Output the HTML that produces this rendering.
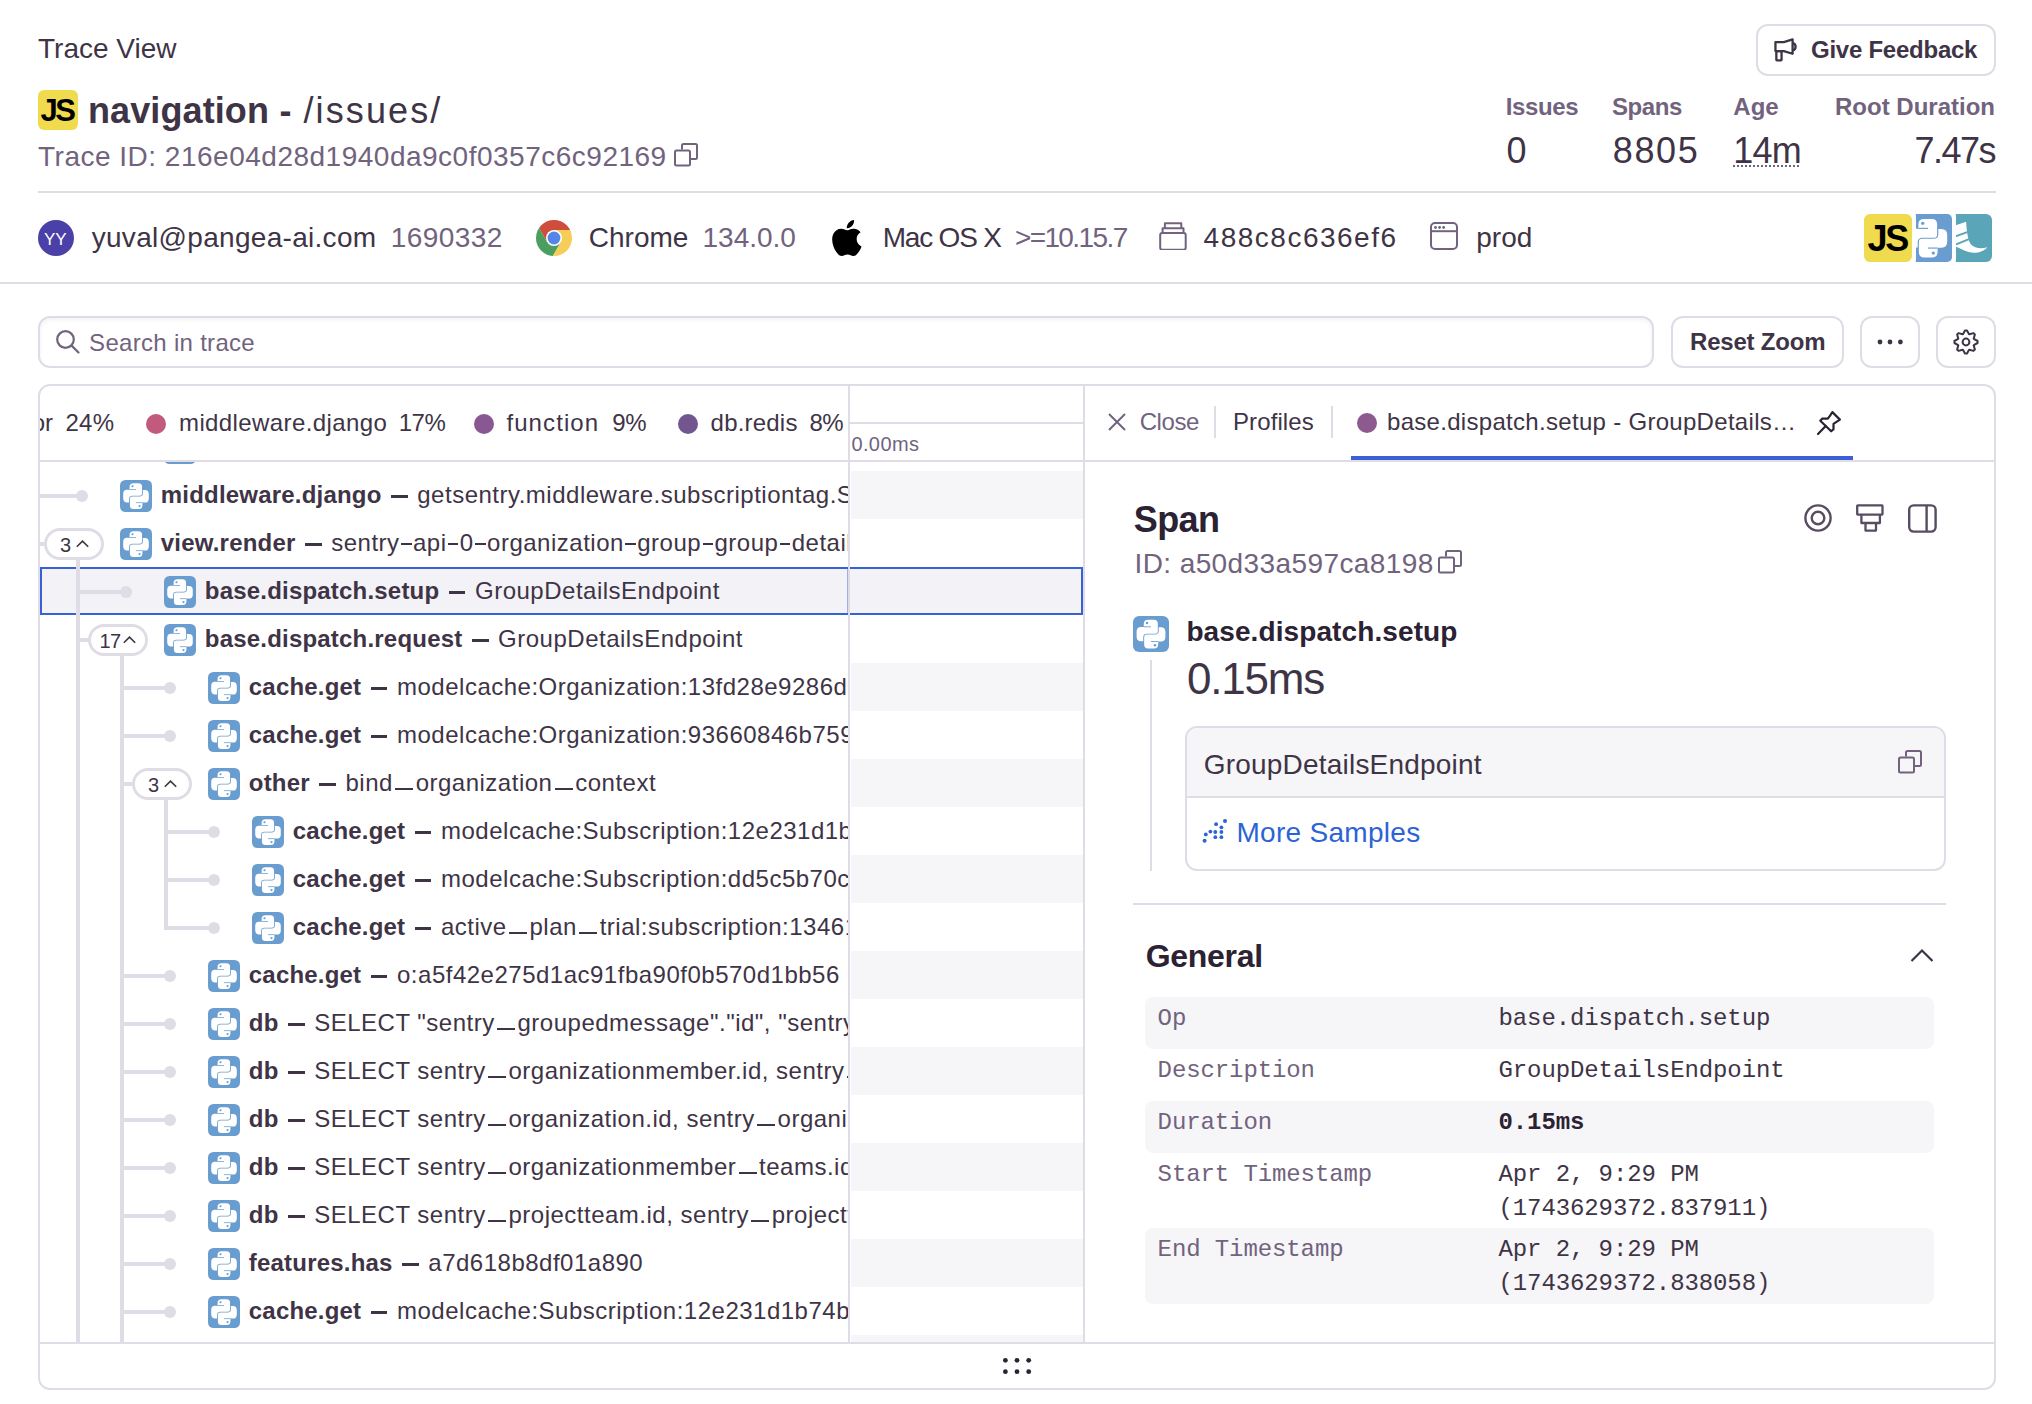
<!DOCTYPE html>
<html><head><meta charset="utf-8"><title>Trace View</title>
<style>
html,body{margin:0;padding:0;background:#fff;}
body{position:relative;width:2032px;height:1404px;overflow:hidden;font-family:"Liberation Sans",sans-serif;}
.t{position:absolute;white-space:nowrap;line-height:1;}
.t b{font-weight:700;letter-spacing:0.2px}
.d{letter-spacing:0.5px}
.h{display:inline-block;width:10.6px;height:2.2px;background:#3E3446;margin:0 1.4px;vertical-align:5.6px}
.u{display:inline-block;width:18px;height:2.5px;background:#3E3446;margin:0 2.3px 0 2.5px;vertical-align:0.5px}
.dash{display:inline-block;width:16.5px;height:2.6px;background:#3E3446;margin:0 9.6px;vertical-align:5px}
</style></head><body>
<div class="t" style="left:38px;top:35.30px;font-size:28px;color:#3E3446;font-weight:400;font-family:'Liberation Sans', sans-serif;">Trace View</div>
<div style="position:absolute;left:1756px;top:24px;width:240px;height:52px;box-sizing:border-box;border:2px solid #E0DCE5;border-radius:12px;background:#fff"></div>
<svg style="position:absolute;left:1772px;top:36px;" width="28" height="28" viewBox="0 0 28 28"><g fill="none" stroke="#3E3446" stroke-width="2.3" stroke-linejoin="round"><path d="M3.45 6.05H11.8L20.6 3.45V17.75L11.8 15.05H3.45Z"/><path d="M20.6 7.2A3.6 3.6 0 0 1 20.6 14.3"/><rect x="4.35" y="15.05" width="5.2" height="9.3" rx="0.5"/></g></svg>
<div class="t" style="left:1811px;top:37.88px;font-size:24px;color:#3E3446;font-weight:700;font-family:'Liberation Sans', sans-serif;letter-spacing:-0.25px;">Give Feedback</div>
<div style="position:absolute;left:38px;top:90px;width:40px;height:40px;background:#F0DB4F;border-radius:6px"></div>
<div class="t" style="left:40.5px;top:95.26px;font-size:31px;color:#000;font-weight:700;font-family:'Liberation Sans', sans-serif;letter-spacing:-2.6px;">JS</div>
<div class="t" style="left:88px;top:92.83px;font-size:36px;color:#3E3446;font-weight:700;font-family:'Liberation Sans', sans-serif;letter-spacing:0.1px;">navigation</div>
<div class="t" style="left:279.5px;top:92.83px;font-size:36px;color:#3E3446;font-weight:700;font-family:'Liberation Sans', sans-serif;">-</div>
<div class="t" style="left:303.5px;top:92.83px;font-size:36px;color:#3E3446;font-weight:400;font-family:'Liberation Sans', sans-serif;letter-spacing:2.1px;">/issues/</div>
<div class="t" style="left:38px;top:143.30px;font-size:28px;color:#71637E;font-weight:400;font-family:'Liberation Sans', sans-serif;letter-spacing:0.5px;">Trace ID: 216e04d28d1940da9c0f0357c6c92169</div>
<svg style="position:absolute;left:674px;top:143px;" width="24" height="24" viewBox="0 0 24 24"><g fill="none" stroke="#71637E" stroke-width="2" stroke-linejoin="round"><path d="M8 6.5V2.5Q8 1 9.5 1H21.5Q23 1 23 2.5V14.5Q23 16 21.5 16H17"/><rect x="1" y="7.5" width="15" height="15" rx="1.5"/></g></svg>
<div style="position:absolute;left:38px;top:191px;width:1958px;height:2px;background:#E0DCE5"></div>
<div class="t" style="left:1505.7px;top:94.58px;font-size:24px;color:#71637E;font-weight:700;font-family:'Liberation Sans', sans-serif;letter-spacing:-0.35px;">Issues</div>
<div class="t" style="left:1612px;top:94.58px;font-size:24px;color:#71637E;font-weight:700;font-family:'Liberation Sans', sans-serif;letter-spacing:-0.4px;">Spans</div>
<div class="t" style="left:1733.3px;top:94.58px;font-size:24px;color:#71637E;font-weight:700;font-family:'Liberation Sans', sans-serif;">Age</div>
<div class="t" style="right:37px;top:94.58px;font-size:24px;color:#71637E;font-weight:700;font-family:'Liberation Sans', sans-serif;">Root Duration</div>
<div class="t" style="left:1506.5px;top:132.53px;font-size:36px;color:#3E3446;font-weight:400;font-family:'Liberation Sans', sans-serif;">0</div>
<div class="t" style="left:1612.8px;top:132.53px;font-size:36px;color:#3E3446;font-weight:400;font-family:'Liberation Sans', sans-serif;letter-spacing:1.6px;">8805</div>
<div class="t" style="left:1733.3px;top:132.53px;font-size:36px;color:#3E3446;font-weight:400;font-family:'Liberation Sans', sans-serif;letter-spacing:-0.8px;">14m</div>
<div style="position:absolute;left:1733px;top:165px;width:68px;height:2px;background-image:linear-gradient(90deg,#71637E 50%,transparent 50%);background-size:4px 2px"></div>
<div class="t" style="right:37px;top:132.53px;font-size:36px;color:#3E3446;font-weight:400;font-family:'Liberation Sans', sans-serif;letter-spacing:-1.5px;">7.47s</div>
<div style="position:absolute;left:38px;top:220px;width:36px;height:36px;background:#4B3FA8;border-radius:50%"></div>
<div class="t" style="left:44px;top:230.61px;font-size:17px;color:#fff;font-weight:400;font-family:'Liberation Sans', sans-serif;">YY</div>
<div class="t" style="left:91.7px;top:224.30px;font-size:28px;color:#3E3446;font-weight:400;font-family:'Liberation Sans', sans-serif;letter-spacing:0.3px;">yuval@pangea-ai.com</div>
<div class="t" style="left:390.8px;top:224.30px;font-size:28px;color:#71637E;font-weight:400;font-family:'Liberation Sans', sans-serif;letter-spacing:0.4px;">1690332</div>
<svg style="position:absolute;left:536px;top:220px;" width="36" height="36" viewBox="0 0 36 36"><defs><clipPath id="chc"><circle cx="18" cy="18" r="18"/></clipPath></defs><g clip-path="url(#chc)"><path d="M18 10 L60 10 L60 -60 L-60 -60 L-11.9 -17.8 L11.07 22 Z" fill="#CE4D3B"/><path d="M11.07 22 L-11.9 -17.8 L-60 0 L-60 60 L4.93 56.6 L24.93 22 Z" fill="#4A9E5F"/><path d="M24.93 22 L4.93 56.6 L60 60 L60 10 L18 10 Z" fill="#F5CD58"/></g><circle cx="18" cy="18" r="8" fill="#fff"/><circle cx="18" cy="18" r="6.4" fill="#5485E8"/></svg>
<div class="t" style="left:588.8px;top:224.30px;font-size:28px;color:#3E3446;font-weight:400;font-family:'Liberation Sans', sans-serif;">Chrome</div>
<div class="t" style="left:702.5px;top:224.30px;font-size:28px;color:#71637E;font-weight:400;font-family:'Liberation Sans', sans-serif;">134.0.0</div>
<svg style="position:absolute;left:831px;top:220px;" width="32" height="36" viewBox="2.5 0 19.2 24"><path fill="#000" d="M12.152 6.896c-.948 0-2.415-1.078-3.96-1.04-2.04.027-3.91 1.183-4.961 3.014-2.117 3.675-.546 9.103 1.519 12.09 1.013 1.454 2.208 3.09 3.792 3.039 1.52-.065 2.09-.987 3.935-.987 1.831 0 2.35.987 3.96.948 1.637-.026 2.676-1.48 3.676-2.948 1.156-1.688 1.636-3.325 1.662-3.415-.039-.013-3.182-1.221-3.22-4.857-.026-3.04 2.48-4.494 2.597-4.559-1.429-2.09-3.623-2.324-4.39-2.376-2-.156-3.675 1.090-4.610 1.090zM15.53 3.830c.843-1.012 1.4-2.427 1.245-3.830-1.207.052-2.662.805-3.532 1.818-.78.896-1.454 2.338-1.273 3.714 1.338.104 2.715-.688 3.559-1.701"/></svg>
<div class="t" style="left:882.7px;top:224.30px;font-size:28px;color:#3E3446;font-weight:400;font-family:'Liberation Sans', sans-serif;letter-spacing:-1.2px;">Mac OS X</div>
<div class="t" style="left:1014.9px;top:224.30px;font-size:28px;color:#71637E;font-weight:400;font-family:'Liberation Sans', sans-serif;letter-spacing:-1.6px;">&gt;=10.15.7</div>
<svg style="position:absolute;left:1159px;top:222px;" width="28" height="28" viewBox="0 0 28 28"><g fill="none" stroke="#71637E" stroke-width="2" stroke-linejoin="round"><rect x="1.2" y="10.9" width="25.5" height="16.8" rx="2"/><path d="M3.6 10.9V6.2H24.5V10.9"/><path d="M5.9 6.2V1.2H22.3V6.2"/></g></svg>
<div class="t" style="left:1203.6px;top:224.30px;font-size:28px;color:#3E3446;font-weight:400;font-family:'Liberation Sans', sans-serif;letter-spacing:1.5px;">488c8c636ef6</div>
<svg style="position:absolute;left:1430px;top:222px;" width="28" height="28" viewBox="0 0 28 28"><g fill="none" stroke="#71637E" stroke-width="2"><rect x="1" y="1" width="26" height="26" rx="4"/><path d="M1 9.2H27"/></g><g fill="#71637E"><circle cx="5.5" cy="5.5" r="1.4"/><circle cx="9.6" cy="5.5" r="1.4"/><circle cx="13.6" cy="5.5" r="1.4"/></g></svg>
<div class="t" style="left:1476.3px;top:224.30px;font-size:28px;color:#3E3446;font-weight:400;font-family:'Liberation Sans', sans-serif;">prod</div>
<svg style="position:absolute;left:1944px;top:214px;" width="48" height="48" viewBox="0 0 48 48"><rect width="48" height="48" rx="6" fill="#5AA6B8"/><path fill="#fff" d="M0 15.3 L22.1 7.7 C22.8 17 23.5 25.5 27 30.5 C30.5 34.3 37 35 43.4 33.2 C40.5 36.8 34.5 39 29 38.7 C23 38.4 18 35.5 14 33.5 L0 28 Z"/><path fill="none" stroke="#5AA6B8" stroke-width="1.9" d="M0 26.6 L23.2 18.1 M0 35.3 L25 25.2"/></svg>
<div style="position:absolute;left:1900px;top:210px;width:56px;height:56px;background:#fff;border-radius:6px"></div>
<svg style="position:absolute;left:1904px;top:214px;" width="48" height="48" viewBox="0 0 100 100"><rect width="100" height="100" rx="10" fill="#6A9DCF"/><path d="M42 10.5H58Q69 10.5 69 21.5V43Q69 49.5 62 49.5H38.5Q28.5 49.5 28.5 59V70H22Q10 70 10 57V43.5Q10 30.5 22 30.5H30V21.5Q30 10.5 42 10.5Z" fill="#fff"/><rect x="30" y="28.8" width="20" height="2.4" fill="#6A9DCF"/><circle cx="39" cy="19.5" r="3.4" fill="#6A9DCF"/><g transform="rotate(180 50 50.5)"><path d="M42 10.5H58Q69 10.5 69 21.5V43Q69 49.5 62 49.5H38.5Q28.5 49.5 28.5 59V70H22Q10 70 10 57V43.5Q10 30.5 22 30.5H30V21.5Q30 10.5 42 10.5Z" fill="#fff"/><rect x="30" y="28.8" width="20" height="2.4" fill="#6A9DCF"/><circle cx="39" cy="19.5" r="3.4" fill="#6A9DCF"/></g></svg>
<div style="position:absolute;left:1860px;top:210px;width:56px;height:56px;background:#fff;border-radius:6px"></div>
<div style="position:absolute;left:1864px;top:214px;width:48px;height:48px;background:#F0DB4F;border-radius:6px"></div>
<div class="t" style="left:1867.5px;top:221.03px;font-size:36px;color:#000;font-weight:700;font-family:'Liberation Sans', sans-serif;letter-spacing:-2.2px;">JS</div>
<div style="position:absolute;left:0px;top:282px;width:2032px;height:2px;background:#E0DCE5"></div>
<div style="position:absolute;left:38px;top:316px;width:1616px;height:52px;box-sizing:border-box;border:2px solid #E0DCE5;border-radius:12px;background:#fff;box-shadow:inset 0 2px 4px rgba(43,34,51,0.06)"></div>
<svg style="position:absolute;left:54px;top:328px;" width="28" height="28" viewBox="0 0 28 28"><g fill="none" stroke="#71637E" stroke-width="2.2" stroke-linecap="round"><circle cx="11.5" cy="11.5" r="8.3"/><path d="M17.6 17.6L24.5 24.5"/></g></svg>
<div class="t" style="left:89.1px;top:330.68px;font-size:24px;color:#71637E;font-weight:400;font-family:'Liberation Sans', sans-serif;letter-spacing:0.3px;">Search in trace</div>
<div style="position:absolute;left:1671px;top:316px;width:173px;height:52px;box-sizing:border-box;border:2px solid #E0DCE5;border-radius:12px;background:#fff"></div>
<div class="t" style="left:1690px;top:329.68px;font-size:24px;color:#3E3446;font-weight:700;font-family:'Liberation Sans', sans-serif;letter-spacing:-0.2px;">Reset Zoom</div>
<div style="position:absolute;left:1860px;top:316px;width:60px;height:52px;box-sizing:border-box;border:2px solid #E0DCE5;border-radius:12px;background:#fff"></div>
<svg style="position:absolute;left:1870px;top:332px;" width="40" height="20" viewBox="0 0 40 20"><g fill="#3E3446"><circle cx="10" cy="10" r="2.4"/><circle cx="20" cy="10" r="2.4"/><circle cx="30.4" cy="10" r="2.4"/></g></svg>
<div style="position:absolute;left:1936px;top:316px;width:60px;height:52px;box-sizing:border-box;border:2px solid #E0DCE5;border-radius:12px;background:#fff"></div>
<svg style="position:absolute;left:1952px;top:328px;" width="28" height="28" viewBox="0 0 28 28"><g fill="none" stroke="#3E3446" stroke-width="2" stroke-linejoin="round"><path d="M21.82 10.94 L25.56 13.00 L25.56 15.00 L21.82 17.06 L21.70 17.37 L22.88 21.46 L21.46 22.88 L17.37 21.70 L17.06 21.82 L15.00 25.56 L13.00 25.56 L10.94 21.82 L10.63 21.70 L6.54 22.88 L5.12 21.46 L6.30 17.37 L6.18 17.06 L2.44 15.00 L2.44 13.00 L6.18 10.94 L6.30 10.63 L5.12 6.54 L6.54 5.12 L10.63 6.30 L10.94 6.18 L13.00 2.44 L15.00 2.44 L17.06 6.18 L17.37 6.30 L21.46 5.12 L22.88 6.54 L21.70 10.63Z"/><circle cx="14" cy="14" r="3.4"/></g></svg>
<div style="position:absolute;left:38px;top:384px;width:1958px;height:1006px;box-sizing:border-box;border:2px solid #E0DCE5;border-radius:12px;background:#fff"></div>
<div style="position:absolute;left:851px;top:471px;width:232px;height:48px;background:#F6F5F8"></div>
<div style="position:absolute;left:851px;top:567px;width:232px;height:48px;background:#F6F5F8"></div>
<div style="position:absolute;left:851px;top:663px;width:232px;height:48px;background:#F6F5F8"></div>
<div style="position:absolute;left:851px;top:759px;width:232px;height:48px;background:#F6F5F8"></div>
<div style="position:absolute;left:851px;top:855px;width:232px;height:48px;background:#F6F5F8"></div>
<div style="position:absolute;left:851px;top:951px;width:232px;height:48px;background:#F6F5F8"></div>
<div style="position:absolute;left:851px;top:1047px;width:232px;height:48px;background:#F6F5F8"></div>
<div style="position:absolute;left:851px;top:1143px;width:232px;height:48px;background:#F6F5F8"></div>
<div style="position:absolute;left:851px;top:1239px;width:232px;height:48px;background:#F6F5F8"></div>
<div style="position:absolute;left:851px;top:1335px;width:232px;height:7px;background:#F6F5F8"></div>
<div style="position:absolute;left:40px;top:567px;width:1043px;height:48px;box-sizing:border-box;border:2px solid #3662D6;background:#F3F2F7"></div>
<div style="position:absolute;left:40px;top:460px;width:1955px;height:2px;background:#E0DCE5"></div>
<div style="position:absolute;left:850px;top:422px;width:233px;height:2px;background:#E0DCE5"></div>
<div class="t" style="left:851.4px;top:434.07px;font-size:20px;color:#71637E;font-weight:400;font-family:'Liberation Sans', sans-serif;letter-spacing:0.4px;">0.00ms</div>
<div style="position:absolute;left:0;top:0;width:2032px;height:1404px;clip-path:inset(386px 1184px 944px 40px)">
<div class="t" style="right:1979px;top:410.68px;font-size:24px;color:#3E3446;font-weight:400;font-family:'Liberation Sans', sans-serif;">or</div>
<div class="t" style="left:65.4px;top:410.68px;font-size:24px;color:#3E3446;font-weight:400;font-family:'Liberation Sans', sans-serif;letter-spacing:0.3px;">24%</div>
<div style="position:absolute;left:146px;top:413.6px;width:20px;height:20px;background:#C25A7D;border-radius:50%"></div>
<div class="t" style="left:179px;top:410.68px;font-size:24px;color:#3E3446;font-weight:400;font-family:'Liberation Sans', sans-serif;letter-spacing:0.4px;">middleware.django</div>
<div class="t" style="left:398.7px;top:410.68px;font-size:24px;color:#3E3446;font-weight:400;font-family:'Liberation Sans', sans-serif;letter-spacing:-0.5px;">17%</div>
<div style="position:absolute;left:474px;top:413.6px;width:20px;height:20px;background:#895792;border-radius:50%"></div>
<div class="t" style="left:506.4px;top:410.68px;font-size:24px;color:#3E3446;font-weight:400;font-family:'Liberation Sans', sans-serif;letter-spacing:1.1px;">function</div>
<div class="t" style="left:612.3px;top:410.68px;font-size:24px;color:#3E3446;font-weight:400;font-family:'Liberation Sans', sans-serif;letter-spacing:-0.5px;">9%</div>
<div style="position:absolute;left:678px;top:413.6px;width:20px;height:20px;background:#735590;border-radius:50%"></div>
<div class="t" style="left:710.6px;top:410.68px;font-size:24px;color:#3E3446;font-weight:400;font-family:'Liberation Sans', sans-serif;letter-spacing:0.2px;">db.redis</div>
<div class="t" style="left:809.4px;top:410.68px;font-size:24px;color:#3E3446;font-weight:400;font-family:'Liberation Sans', sans-serif;letter-spacing:-0.5px;">8%</div>
</div>
<div style="position:absolute;left:0;top:0;width:2032px;height:1404px;clip-path:inset(462px 1184px 62px 40px)">
<div style="position:absolute;left:76px;top:545px;width:4px;height:797px;background:#E0DCE5"></div>
<div style="position:absolute;left:120px;top:641px;width:4px;height:701px;background:#E0DCE5"></div>
<div style="position:absolute;left:164px;top:785px;width:4px;height:145px;background:#E0DCE5"></div>
<div style="position:absolute;left:40px;top:494px;width:42px;height:4px;background:#E0DCE5"></div>
<div style="position:absolute;left:76px;top:490px;width:12px;height:12px;background:#E0DCE5;border-radius:50%"></div>
<div style="position:absolute;left:40px;top:542px;width:6px;height:4px;background:#E0DCE5"></div>
<div style="position:absolute;left:44px;top:528px;width:60px;height:32px;box-sizing:border-box;border:3px solid #E0DCE5;border-radius:16px;background:#fff"></div>
<div class="t" style="left:60px;top:534.57px;font-size:20px;color:#3E3446;font-weight:400;font-family:'Liberation Sans', sans-serif;">3</div>
<svg style="position:absolute;left:76px;top:540px;" width="13" height="8" viewBox="0 0 13 8"><path d="M0.8 6.8L6.5 1.1L12.2 6.8" fill="none" stroke="#3E3446" stroke-width="1.6"/></svg>
<div style="position:absolute;left:78px;top:590px;width:48px;height:4px;background:#E0DCE5"></div>
<div style="position:absolute;left:120px;top:586px;width:12px;height:12px;background:#E0DCE5;border-radius:50%"></div>
<div style="position:absolute;left:78px;top:638px;width:12px;height:4px;background:#E0DCE5"></div>
<div style="position:absolute;left:88px;top:624px;width:60px;height:32px;box-sizing:border-box;border:3px solid #E0DCE5;border-radius:16px;background:#fff"></div>
<div class="t" style="left:99.5px;top:630.57px;font-size:20px;color:#3E3446;font-weight:400;font-family:'Liberation Sans', sans-serif;letter-spacing:-0.5px;">17</div>
<svg style="position:absolute;left:123px;top:636px;" width="13" height="8" viewBox="0 0 13 8"><path d="M0.8 6.8L6.5 1.1L12.2 6.8" fill="none" stroke="#3E3446" stroke-width="1.6"/></svg>
<div style="position:absolute;left:122px;top:686px;width:48px;height:4px;background:#E0DCE5"></div>
<div style="position:absolute;left:164px;top:682px;width:12px;height:12px;background:#E0DCE5;border-radius:50%"></div>
<div style="position:absolute;left:122px;top:734px;width:48px;height:4px;background:#E0DCE5"></div>
<div style="position:absolute;left:164px;top:730px;width:12px;height:12px;background:#E0DCE5;border-radius:50%"></div>
<div style="position:absolute;left:122px;top:782px;width:12px;height:4px;background:#E0DCE5"></div>
<div style="position:absolute;left:132px;top:768px;width:60px;height:32px;box-sizing:border-box;border:3px solid #E0DCE5;border-radius:16px;background:#fff"></div>
<div class="t" style="left:148px;top:774.57px;font-size:20px;color:#3E3446;font-weight:400;font-family:'Liberation Sans', sans-serif;">3</div>
<svg style="position:absolute;left:164px;top:780px;" width="13" height="8" viewBox="0 0 13 8"><path d="M0.8 6.8L6.5 1.1L12.2 6.8" fill="none" stroke="#3E3446" stroke-width="1.6"/></svg>
<div style="position:absolute;left:164px;top:830px;width:50px;height:4px;background:#E0DCE5"></div>
<div style="position:absolute;left:208px;top:826px;width:12px;height:12px;background:#E0DCE5;border-radius:50%"></div>
<div style="position:absolute;left:164px;top:878px;width:50px;height:4px;background:#E0DCE5"></div>
<div style="position:absolute;left:208px;top:874px;width:12px;height:12px;background:#E0DCE5;border-radius:50%"></div>
<div style="position:absolute;left:164px;top:926px;width:50px;height:4px;background:#E0DCE5"></div>
<div style="position:absolute;left:208px;top:922px;width:12px;height:12px;background:#E0DCE5;border-radius:50%"></div>
<div style="position:absolute;left:122px;top:974px;width:48px;height:4px;background:#E0DCE5"></div>
<div style="position:absolute;left:164px;top:970px;width:12px;height:12px;background:#E0DCE5;border-radius:50%"></div>
<div style="position:absolute;left:122px;top:1022px;width:48px;height:4px;background:#E0DCE5"></div>
<div style="position:absolute;left:164px;top:1018px;width:12px;height:12px;background:#E0DCE5;border-radius:50%"></div>
<div style="position:absolute;left:122px;top:1070px;width:48px;height:4px;background:#E0DCE5"></div>
<div style="position:absolute;left:164px;top:1066px;width:12px;height:12px;background:#E0DCE5;border-radius:50%"></div>
<div style="position:absolute;left:122px;top:1118px;width:48px;height:4px;background:#E0DCE5"></div>
<div style="position:absolute;left:164px;top:1114px;width:12px;height:12px;background:#E0DCE5;border-radius:50%"></div>
<div style="position:absolute;left:122px;top:1166px;width:48px;height:4px;background:#E0DCE5"></div>
<div style="position:absolute;left:164px;top:1162px;width:12px;height:12px;background:#E0DCE5;border-radius:50%"></div>
<div style="position:absolute;left:122px;top:1214px;width:48px;height:4px;background:#E0DCE5"></div>
<div style="position:absolute;left:164px;top:1210px;width:12px;height:12px;background:#E0DCE5;border-radius:50%"></div>
<div style="position:absolute;left:122px;top:1262px;width:48px;height:4px;background:#E0DCE5"></div>
<div style="position:absolute;left:164px;top:1258px;width:12px;height:12px;background:#E0DCE5;border-radius:50%"></div>
<div style="position:absolute;left:122px;top:1310px;width:48px;height:4px;background:#E0DCE5"></div>
<div style="position:absolute;left:164px;top:1306px;width:12px;height:12px;background:#E0DCE5;border-radius:50%"></div>
<div style="position:absolute;left:122px;top:1358px;width:48px;height:4px;background:#E0DCE5"></div>
<div style="position:absolute;left:164px;top:1354px;width:12px;height:12px;background:#E0DCE5;border-radius:50%"></div>
<svg style="position:absolute;left:164px;top:432px;" width="32" height="32" viewBox="0 0 100 100"><rect width="100" height="100" rx="17" fill="#6A9DCF"/><path d="M42 10.5H58Q69 10.5 69 21.5V43Q69 49.5 62 49.5H38.5Q28.5 49.5 28.5 59V70H22Q10 70 10 57V43.5Q10 30.5 22 30.5H30V21.5Q30 10.5 42 10.5Z" fill="#fff"/><rect x="30" y="28.8" width="20" height="2.4" fill="#6A9DCF"/><circle cx="39" cy="19.5" r="3.4" fill="#6A9DCF"/><g transform="rotate(180 50 50.5)"><path d="M42 10.5H58Q69 10.5 69 21.5V43Q69 49.5 62 49.5H38.5Q28.5 49.5 28.5 59V70H22Q10 70 10 57V43.5Q10 30.5 22 30.5H30V21.5Q30 10.5 42 10.5Z" fill="#fff"/><rect x="30" y="28.8" width="20" height="2.4" fill="#6A9DCF"/><circle cx="39" cy="19.5" r="3.4" fill="#6A9DCF"/></g></svg>
<svg style="position:absolute;left:120px;top:480px;" width="32" height="32" viewBox="0 0 100 100"><rect width="100" height="100" rx="17" fill="#6A9DCF"/><path d="M42 10.5H58Q69 10.5 69 21.5V43Q69 49.5 62 49.5H38.5Q28.5 49.5 28.5 59V70H22Q10 70 10 57V43.5Q10 30.5 22 30.5H30V21.5Q30 10.5 42 10.5Z" fill="#fff"/><rect x="30" y="28.8" width="20" height="2.4" fill="#6A9DCF"/><circle cx="39" cy="19.5" r="3.4" fill="#6A9DCF"/><g transform="rotate(180 50 50.5)"><path d="M42 10.5H58Q69 10.5 69 21.5V43Q69 49.5 62 49.5H38.5Q28.5 49.5 28.5 59V70H22Q10 70 10 57V43.5Q10 30.5 22 30.5H30V21.5Q30 10.5 42 10.5Z" fill="#fff"/><rect x="30" y="28.8" width="20" height="2.4" fill="#6A9DCF"/><circle cx="39" cy="19.5" r="3.4" fill="#6A9DCF"/></g></svg>
<div class="t" style="left:160.8px;top:482.98px;font-size:24px;color:#3E3446;font-weight:400;font-family:'Liberation Sans', sans-serif;"><b>middleware.django</b><span class="dash"></span><span class="d">getsentry.middleware.subscriptiontag.SubscriptionMiddleware</span></div>
<svg style="position:absolute;left:120px;top:528px;" width="32" height="32" viewBox="0 0 100 100"><rect width="100" height="100" rx="17" fill="#6A9DCF"/><path d="M42 10.5H58Q69 10.5 69 21.5V43Q69 49.5 62 49.5H38.5Q28.5 49.5 28.5 59V70H22Q10 70 10 57V43.5Q10 30.5 22 30.5H30V21.5Q30 10.5 42 10.5Z" fill="#fff"/><rect x="30" y="28.8" width="20" height="2.4" fill="#6A9DCF"/><circle cx="39" cy="19.5" r="3.4" fill="#6A9DCF"/><g transform="rotate(180 50 50.5)"><path d="M42 10.5H58Q69 10.5 69 21.5V43Q69 49.5 62 49.5H38.5Q28.5 49.5 28.5 59V70H22Q10 70 10 57V43.5Q10 30.5 22 30.5H30V21.5Q30 10.5 42 10.5Z" fill="#fff"/><rect x="30" y="28.8" width="20" height="2.4" fill="#6A9DCF"/><circle cx="39" cy="19.5" r="3.4" fill="#6A9DCF"/></g></svg>
<div class="t" style="left:160.8px;top:530.98px;font-size:24px;color:#3E3446;font-weight:400;font-family:'Liberation Sans', sans-serif;"><b>view.render</b><span class="dash"></span><span class="d">sentry<i class="h"></i>api<i class="h"></i>0<i class="h"></i>organization<i class="h"></i>group<i class="h"></i>group<i class="h"></i>details</span></div>
<svg style="position:absolute;left:164px;top:576px;" width="32" height="32" viewBox="0 0 100 100"><rect width="100" height="100" rx="17" fill="#6A9DCF"/><path d="M42 10.5H58Q69 10.5 69 21.5V43Q69 49.5 62 49.5H38.5Q28.5 49.5 28.5 59V70H22Q10 70 10 57V43.5Q10 30.5 22 30.5H30V21.5Q30 10.5 42 10.5Z" fill="#fff"/><rect x="30" y="28.8" width="20" height="2.4" fill="#6A9DCF"/><circle cx="39" cy="19.5" r="3.4" fill="#6A9DCF"/><g transform="rotate(180 50 50.5)"><path d="M42 10.5H58Q69 10.5 69 21.5V43Q69 49.5 62 49.5H38.5Q28.5 49.5 28.5 59V70H22Q10 70 10 57V43.5Q10 30.5 22 30.5H30V21.5Q30 10.5 42 10.5Z" fill="#fff"/><rect x="30" y="28.8" width="20" height="2.4" fill="#6A9DCF"/><circle cx="39" cy="19.5" r="3.4" fill="#6A9DCF"/></g></svg>
<div class="t" style="left:204.8px;top:578.98px;font-size:24px;color:#3E3446;font-weight:400;font-family:'Liberation Sans', sans-serif;"><b>base.dispatch.setup</b><span class="dash"></span><span class="d">GroupDetailsEndpoint</span></div>
<svg style="position:absolute;left:164px;top:624px;" width="32" height="32" viewBox="0 0 100 100"><rect width="100" height="100" rx="17" fill="#6A9DCF"/><path d="M42 10.5H58Q69 10.5 69 21.5V43Q69 49.5 62 49.5H38.5Q28.5 49.5 28.5 59V70H22Q10 70 10 57V43.5Q10 30.5 22 30.5H30V21.5Q30 10.5 42 10.5Z" fill="#fff"/><rect x="30" y="28.8" width="20" height="2.4" fill="#6A9DCF"/><circle cx="39" cy="19.5" r="3.4" fill="#6A9DCF"/><g transform="rotate(180 50 50.5)"><path d="M42 10.5H58Q69 10.5 69 21.5V43Q69 49.5 62 49.5H38.5Q28.5 49.5 28.5 59V70H22Q10 70 10 57V43.5Q10 30.5 22 30.5H30V21.5Q30 10.5 42 10.5Z" fill="#fff"/><rect x="30" y="28.8" width="20" height="2.4" fill="#6A9DCF"/><circle cx="39" cy="19.5" r="3.4" fill="#6A9DCF"/></g></svg>
<div class="t" style="left:204.8px;top:626.98px;font-size:24px;color:#3E3446;font-weight:400;font-family:'Liberation Sans', sans-serif;"><b>base.dispatch.request</b><span class="dash"></span><span class="d">GroupDetailsEndpoint</span></div>
<svg style="position:absolute;left:208px;top:672px;" width="32" height="32" viewBox="0 0 100 100"><rect width="100" height="100" rx="17" fill="#6A9DCF"/><path d="M42 10.5H58Q69 10.5 69 21.5V43Q69 49.5 62 49.5H38.5Q28.5 49.5 28.5 59V70H22Q10 70 10 57V43.5Q10 30.5 22 30.5H30V21.5Q30 10.5 42 10.5Z" fill="#fff"/><rect x="30" y="28.8" width="20" height="2.4" fill="#6A9DCF"/><circle cx="39" cy="19.5" r="3.4" fill="#6A9DCF"/><g transform="rotate(180 50 50.5)"><path d="M42 10.5H58Q69 10.5 69 21.5V43Q69 49.5 62 49.5H38.5Q28.5 49.5 28.5 59V70H22Q10 70 10 57V43.5Q10 30.5 22 30.5H30V21.5Q30 10.5 42 10.5Z" fill="#fff"/><rect x="30" y="28.8" width="20" height="2.4" fill="#6A9DCF"/><circle cx="39" cy="19.5" r="3.4" fill="#6A9DCF"/></g></svg>
<div class="t" style="left:248.8px;top:674.98px;font-size:24px;color:#3E3446;font-weight:400;font-family:'Liberation Sans', sans-serif;"><b>cache.get</b><span class="dash"></span><span class="d">modelcache:Organization:13fd28e9286d0c</span></div>
<svg style="position:absolute;left:208px;top:720px;" width="32" height="32" viewBox="0 0 100 100"><rect width="100" height="100" rx="17" fill="#6A9DCF"/><path d="M42 10.5H58Q69 10.5 69 21.5V43Q69 49.5 62 49.5H38.5Q28.5 49.5 28.5 59V70H22Q10 70 10 57V43.5Q10 30.5 22 30.5H30V21.5Q30 10.5 42 10.5Z" fill="#fff"/><rect x="30" y="28.8" width="20" height="2.4" fill="#6A9DCF"/><circle cx="39" cy="19.5" r="3.4" fill="#6A9DCF"/><g transform="rotate(180 50 50.5)"><path d="M42 10.5H58Q69 10.5 69 21.5V43Q69 49.5 62 49.5H38.5Q28.5 49.5 28.5 59V70H22Q10 70 10 57V43.5Q10 30.5 22 30.5H30V21.5Q30 10.5 42 10.5Z" fill="#fff"/><rect x="30" y="28.8" width="20" height="2.4" fill="#6A9DCF"/><circle cx="39" cy="19.5" r="3.4" fill="#6A9DCF"/></g></svg>
<div class="t" style="left:248.8px;top:722.98px;font-size:24px;color:#3E3446;font-weight:400;font-family:'Liberation Sans', sans-serif;"><b>cache.get</b><span class="dash"></span><span class="d">modelcache:Organization:93660846b759a</span></div>
<svg style="position:absolute;left:208px;top:768px;" width="32" height="32" viewBox="0 0 100 100"><rect width="100" height="100" rx="17" fill="#6A9DCF"/><path d="M42 10.5H58Q69 10.5 69 21.5V43Q69 49.5 62 49.5H38.5Q28.5 49.5 28.5 59V70H22Q10 70 10 57V43.5Q10 30.5 22 30.5H30V21.5Q30 10.5 42 10.5Z" fill="#fff"/><rect x="30" y="28.8" width="20" height="2.4" fill="#6A9DCF"/><circle cx="39" cy="19.5" r="3.4" fill="#6A9DCF"/><g transform="rotate(180 50 50.5)"><path d="M42 10.5H58Q69 10.5 69 21.5V43Q69 49.5 62 49.5H38.5Q28.5 49.5 28.5 59V70H22Q10 70 10 57V43.5Q10 30.5 22 30.5H30V21.5Q30 10.5 42 10.5Z" fill="#fff"/><rect x="30" y="28.8" width="20" height="2.4" fill="#6A9DCF"/><circle cx="39" cy="19.5" r="3.4" fill="#6A9DCF"/></g></svg>
<div class="t" style="left:248.8px;top:770.98px;font-size:24px;color:#3E3446;font-weight:400;font-family:'Liberation Sans', sans-serif;"><b>other</b><span class="dash"></span><span class="d">bind<i class="u"></i>organization<i class="u"></i>context</span></div>
<svg style="position:absolute;left:252px;top:816px;" width="32" height="32" viewBox="0 0 100 100"><rect width="100" height="100" rx="17" fill="#6A9DCF"/><path d="M42 10.5H58Q69 10.5 69 21.5V43Q69 49.5 62 49.5H38.5Q28.5 49.5 28.5 59V70H22Q10 70 10 57V43.5Q10 30.5 22 30.5H30V21.5Q30 10.5 42 10.5Z" fill="#fff"/><rect x="30" y="28.8" width="20" height="2.4" fill="#6A9DCF"/><circle cx="39" cy="19.5" r="3.4" fill="#6A9DCF"/><g transform="rotate(180 50 50.5)"><path d="M42 10.5H58Q69 10.5 69 21.5V43Q69 49.5 62 49.5H38.5Q28.5 49.5 28.5 59V70H22Q10 70 10 57V43.5Q10 30.5 22 30.5H30V21.5Q30 10.5 42 10.5Z" fill="#fff"/><rect x="30" y="28.8" width="20" height="2.4" fill="#6A9DCF"/><circle cx="39" cy="19.5" r="3.4" fill="#6A9DCF"/></g></svg>
<div class="t" style="left:292.8px;top:818.98px;font-size:24px;color:#3E3446;font-weight:400;font-family:'Liberation Sans', sans-serif;"><b>cache.get</b><span class="dash"></span><span class="d">modelcache:Subscription:12e231d1b74b3</span></div>
<svg style="position:absolute;left:252px;top:864px;" width="32" height="32" viewBox="0 0 100 100"><rect width="100" height="100" rx="17" fill="#6A9DCF"/><path d="M42 10.5H58Q69 10.5 69 21.5V43Q69 49.5 62 49.5H38.5Q28.5 49.5 28.5 59V70H22Q10 70 10 57V43.5Q10 30.5 22 30.5H30V21.5Q30 10.5 42 10.5Z" fill="#fff"/><rect x="30" y="28.8" width="20" height="2.4" fill="#6A9DCF"/><circle cx="39" cy="19.5" r="3.4" fill="#6A9DCF"/><g transform="rotate(180 50 50.5)"><path d="M42 10.5H58Q69 10.5 69 21.5V43Q69 49.5 62 49.5H38.5Q28.5 49.5 28.5 59V70H22Q10 70 10 57V43.5Q10 30.5 22 30.5H30V21.5Q30 10.5 42 10.5Z" fill="#fff"/><rect x="30" y="28.8" width="20" height="2.4" fill="#6A9DCF"/><circle cx="39" cy="19.5" r="3.4" fill="#6A9DCF"/></g></svg>
<div class="t" style="left:292.8px;top:866.98px;font-size:24px;color:#3E3446;font-weight:400;font-family:'Liberation Sans', sans-serif;"><b>cache.get</b><span class="dash"></span><span class="d">modelcache:Subscription:dd5c5b70c1a2</span></div>
<svg style="position:absolute;left:252px;top:912px;" width="32" height="32" viewBox="0 0 100 100"><rect width="100" height="100" rx="17" fill="#6A9DCF"/><path d="M42 10.5H58Q69 10.5 69 21.5V43Q69 49.5 62 49.5H38.5Q28.5 49.5 28.5 59V70H22Q10 70 10 57V43.5Q10 30.5 22 30.5H30V21.5Q30 10.5 42 10.5Z" fill="#fff"/><rect x="30" y="28.8" width="20" height="2.4" fill="#6A9DCF"/><circle cx="39" cy="19.5" r="3.4" fill="#6A9DCF"/><g transform="rotate(180 50 50.5)"><path d="M42 10.5H58Q69 10.5 69 21.5V43Q69 49.5 62 49.5H38.5Q28.5 49.5 28.5 59V70H22Q10 70 10 57V43.5Q10 30.5 22 30.5H30V21.5Q30 10.5 42 10.5Z" fill="#fff"/><rect x="30" y="28.8" width="20" height="2.4" fill="#6A9DCF"/><circle cx="39" cy="19.5" r="3.4" fill="#6A9DCF"/></g></svg>
<div class="t" style="left:292.8px;top:914.98px;font-size:24px;color:#3E3446;font-weight:400;font-family:'Liberation Sans', sans-serif;"><b>cache.get</b><span class="dash"></span><span class="d">active<i class="u"></i>plan<i class="u"></i>trial:subscription:134610</span></div>
<svg style="position:absolute;left:208px;top:960px;" width="32" height="32" viewBox="0 0 100 100"><rect width="100" height="100" rx="17" fill="#6A9DCF"/><path d="M42 10.5H58Q69 10.5 69 21.5V43Q69 49.5 62 49.5H38.5Q28.5 49.5 28.5 59V70H22Q10 70 10 57V43.5Q10 30.5 22 30.5H30V21.5Q30 10.5 42 10.5Z" fill="#fff"/><rect x="30" y="28.8" width="20" height="2.4" fill="#6A9DCF"/><circle cx="39" cy="19.5" r="3.4" fill="#6A9DCF"/><g transform="rotate(180 50 50.5)"><path d="M42 10.5H58Q69 10.5 69 21.5V43Q69 49.5 62 49.5H38.5Q28.5 49.5 28.5 59V70H22Q10 70 10 57V43.5Q10 30.5 22 30.5H30V21.5Q30 10.5 42 10.5Z" fill="#fff"/><rect x="30" y="28.8" width="20" height="2.4" fill="#6A9DCF"/><circle cx="39" cy="19.5" r="3.4" fill="#6A9DCF"/></g></svg>
<div class="t" style="left:248.8px;top:962.98px;font-size:24px;color:#3E3446;font-weight:400;font-family:'Liberation Sans', sans-serif;"><b>cache.get</b><span class="dash"></span><span class="d">o:a5f42e275d1ac91fba90f0b570d1bb56</span></div>
<svg style="position:absolute;left:208px;top:1008px;" width="32" height="32" viewBox="0 0 100 100"><rect width="100" height="100" rx="17" fill="#6A9DCF"/><path d="M42 10.5H58Q69 10.5 69 21.5V43Q69 49.5 62 49.5H38.5Q28.5 49.5 28.5 59V70H22Q10 70 10 57V43.5Q10 30.5 22 30.5H30V21.5Q30 10.5 42 10.5Z" fill="#fff"/><rect x="30" y="28.8" width="20" height="2.4" fill="#6A9DCF"/><circle cx="39" cy="19.5" r="3.4" fill="#6A9DCF"/><g transform="rotate(180 50 50.5)"><path d="M42 10.5H58Q69 10.5 69 21.5V43Q69 49.5 62 49.5H38.5Q28.5 49.5 28.5 59V70H22Q10 70 10 57V43.5Q10 30.5 22 30.5H30V21.5Q30 10.5 42 10.5Z" fill="#fff"/><rect x="30" y="28.8" width="20" height="2.4" fill="#6A9DCF"/><circle cx="39" cy="19.5" r="3.4" fill="#6A9DCF"/></g></svg>
<div class="t" style="left:248.8px;top:1010.98px;font-size:24px;color:#3E3446;font-weight:400;font-family:'Liberation Sans', sans-serif;"><b>db</b><span class="dash"></span><span class="d">SELECT "sentry<i class="u"></i>groupedmessage"."id", "sentry<i class="u"></i>groupedmessage"</span></div>
<svg style="position:absolute;left:208px;top:1056px;" width="32" height="32" viewBox="0 0 100 100"><rect width="100" height="100" rx="17" fill="#6A9DCF"/><path d="M42 10.5H58Q69 10.5 69 21.5V43Q69 49.5 62 49.5H38.5Q28.5 49.5 28.5 59V70H22Q10 70 10 57V43.5Q10 30.5 22 30.5H30V21.5Q30 10.5 42 10.5Z" fill="#fff"/><rect x="30" y="28.8" width="20" height="2.4" fill="#6A9DCF"/><circle cx="39" cy="19.5" r="3.4" fill="#6A9DCF"/><g transform="rotate(180 50 50.5)"><path d="M42 10.5H58Q69 10.5 69 21.5V43Q69 49.5 62 49.5H38.5Q28.5 49.5 28.5 59V70H22Q10 70 10 57V43.5Q10 30.5 22 30.5H30V21.5Q30 10.5 42 10.5Z" fill="#fff"/><rect x="30" y="28.8" width="20" height="2.4" fill="#6A9DCF"/><circle cx="39" cy="19.5" r="3.4" fill="#6A9DCF"/></g></svg>
<div class="t" style="left:248.8px;top:1058.98px;font-size:24px;color:#3E3446;font-weight:400;font-family:'Liberation Sans', sans-serif;"><b>db</b><span class="dash"></span><span class="d">SELECT sentry<i class="u"></i>organizationmember.id, sentry<i class="u"></i>organizationmember</span></div>
<svg style="position:absolute;left:208px;top:1104px;" width="32" height="32" viewBox="0 0 100 100"><rect width="100" height="100" rx="17" fill="#6A9DCF"/><path d="M42 10.5H58Q69 10.5 69 21.5V43Q69 49.5 62 49.5H38.5Q28.5 49.5 28.5 59V70H22Q10 70 10 57V43.5Q10 30.5 22 30.5H30V21.5Q30 10.5 42 10.5Z" fill="#fff"/><rect x="30" y="28.8" width="20" height="2.4" fill="#6A9DCF"/><circle cx="39" cy="19.5" r="3.4" fill="#6A9DCF"/><g transform="rotate(180 50 50.5)"><path d="M42 10.5H58Q69 10.5 69 21.5V43Q69 49.5 62 49.5H38.5Q28.5 49.5 28.5 59V70H22Q10 70 10 57V43.5Q10 30.5 22 30.5H30V21.5Q30 10.5 42 10.5Z" fill="#fff"/><rect x="30" y="28.8" width="20" height="2.4" fill="#6A9DCF"/><circle cx="39" cy="19.5" r="3.4" fill="#6A9DCF"/></g></svg>
<div class="t" style="left:248.8px;top:1106.98px;font-size:24px;color:#3E3446;font-weight:400;font-family:'Liberation Sans', sans-serif;"><b>db</b><span class="dash"></span><span class="d">SELECT sentry<i class="u"></i>organization.id, sentry<i class="u"></i>organization.name</span></div>
<svg style="position:absolute;left:208px;top:1152px;" width="32" height="32" viewBox="0 0 100 100"><rect width="100" height="100" rx="17" fill="#6A9DCF"/><path d="M42 10.5H58Q69 10.5 69 21.5V43Q69 49.5 62 49.5H38.5Q28.5 49.5 28.5 59V70H22Q10 70 10 57V43.5Q10 30.5 22 30.5H30V21.5Q30 10.5 42 10.5Z" fill="#fff"/><rect x="30" y="28.8" width="20" height="2.4" fill="#6A9DCF"/><circle cx="39" cy="19.5" r="3.4" fill="#6A9DCF"/><g transform="rotate(180 50 50.5)"><path d="M42 10.5H58Q69 10.5 69 21.5V43Q69 49.5 62 49.5H38.5Q28.5 49.5 28.5 59V70H22Q10 70 10 57V43.5Q10 30.5 22 30.5H30V21.5Q30 10.5 42 10.5Z" fill="#fff"/><rect x="30" y="28.8" width="20" height="2.4" fill="#6A9DCF"/><circle cx="39" cy="19.5" r="3.4" fill="#6A9DCF"/></g></svg>
<div class="t" style="left:248.8px;top:1154.98px;font-size:24px;color:#3E3446;font-weight:400;font-family:'Liberation Sans', sans-serif;"><b>db</b><span class="dash"></span><span class="d">SELECT sentry<i class="u"></i>organizationmember<i class="u"></i>teams.id, sentry<i class="u"></i>org</span></div>
<svg style="position:absolute;left:208px;top:1200px;" width="32" height="32" viewBox="0 0 100 100"><rect width="100" height="100" rx="17" fill="#6A9DCF"/><path d="M42 10.5H58Q69 10.5 69 21.5V43Q69 49.5 62 49.5H38.5Q28.5 49.5 28.5 59V70H22Q10 70 10 57V43.5Q10 30.5 22 30.5H30V21.5Q30 10.5 42 10.5Z" fill="#fff"/><rect x="30" y="28.8" width="20" height="2.4" fill="#6A9DCF"/><circle cx="39" cy="19.5" r="3.4" fill="#6A9DCF"/><g transform="rotate(180 50 50.5)"><path d="M42 10.5H58Q69 10.5 69 21.5V43Q69 49.5 62 49.5H38.5Q28.5 49.5 28.5 59V70H22Q10 70 10 57V43.5Q10 30.5 22 30.5H30V21.5Q30 10.5 42 10.5Z" fill="#fff"/><rect x="30" y="28.8" width="20" height="2.4" fill="#6A9DCF"/><circle cx="39" cy="19.5" r="3.4" fill="#6A9DCF"/></g></svg>
<div class="t" style="left:248.8px;top:1202.98px;font-size:24px;color:#3E3446;font-weight:400;font-family:'Liberation Sans', sans-serif;"><b>db</b><span class="dash"></span><span class="d">SELECT sentry<i class="u"></i>projectteam.id, sentry<i class="u"></i>projectteam.project<i class="u"></i>id</span></div>
<svg style="position:absolute;left:208px;top:1248px;" width="32" height="32" viewBox="0 0 100 100"><rect width="100" height="100" rx="17" fill="#6A9DCF"/><path d="M42 10.5H58Q69 10.5 69 21.5V43Q69 49.5 62 49.5H38.5Q28.5 49.5 28.5 59V70H22Q10 70 10 57V43.5Q10 30.5 22 30.5H30V21.5Q30 10.5 42 10.5Z" fill="#fff"/><rect x="30" y="28.8" width="20" height="2.4" fill="#6A9DCF"/><circle cx="39" cy="19.5" r="3.4" fill="#6A9DCF"/><g transform="rotate(180 50 50.5)"><path d="M42 10.5H58Q69 10.5 69 21.5V43Q69 49.5 62 49.5H38.5Q28.5 49.5 28.5 59V70H22Q10 70 10 57V43.5Q10 30.5 22 30.5H30V21.5Q30 10.5 42 10.5Z" fill="#fff"/><rect x="30" y="28.8" width="20" height="2.4" fill="#6A9DCF"/><circle cx="39" cy="19.5" r="3.4" fill="#6A9DCF"/></g></svg>
<div class="t" style="left:248.8px;top:1250.98px;font-size:24px;color:#3E3446;font-weight:400;font-family:'Liberation Sans', sans-serif;"><b>features.has</b><span class="dash"></span><span class="d">a7d618b8df01a890</span></div>
<svg style="position:absolute;left:208px;top:1296px;" width="32" height="32" viewBox="0 0 100 100"><rect width="100" height="100" rx="17" fill="#6A9DCF"/><path d="M42 10.5H58Q69 10.5 69 21.5V43Q69 49.5 62 49.5H38.5Q28.5 49.5 28.5 59V70H22Q10 70 10 57V43.5Q10 30.5 22 30.5H30V21.5Q30 10.5 42 10.5Z" fill="#fff"/><rect x="30" y="28.8" width="20" height="2.4" fill="#6A9DCF"/><circle cx="39" cy="19.5" r="3.4" fill="#6A9DCF"/><g transform="rotate(180 50 50.5)"><path d="M42 10.5H58Q69 10.5 69 21.5V43Q69 49.5 62 49.5H38.5Q28.5 49.5 28.5 59V70H22Q10 70 10 57V43.5Q10 30.5 22 30.5H30V21.5Q30 10.5 42 10.5Z" fill="#fff"/><rect x="30" y="28.8" width="20" height="2.4" fill="#6A9DCF"/><circle cx="39" cy="19.5" r="3.4" fill="#6A9DCF"/></g></svg>
<div class="t" style="left:248.8px;top:1298.98px;font-size:24px;color:#3E3446;font-weight:400;font-family:'Liberation Sans', sans-serif;"><b>cache.get</b><span class="dash"></span><span class="d">modelcache:Subscription:12e231d1b74b3e</span></div>
<svg style="position:absolute;left:208px;top:1344px;" width="32" height="32" viewBox="0 0 100 100"><rect width="100" height="100" rx="17" fill="#6A9DCF"/><path d="M42 10.5H58Q69 10.5 69 21.5V43Q69 49.5 62 49.5H38.5Q28.5 49.5 28.5 59V70H22Q10 70 10 57V43.5Q10 30.5 22 30.5H30V21.5Q30 10.5 42 10.5Z" fill="#fff"/><rect x="30" y="28.8" width="20" height="2.4" fill="#6A9DCF"/><circle cx="39" cy="19.5" r="3.4" fill="#6A9DCF"/><g transform="rotate(180 50 50.5)"><path d="M42 10.5H58Q69 10.5 69 21.5V43Q69 49.5 62 49.5H38.5Q28.5 49.5 28.5 59V70H22Q10 70 10 57V43.5Q10 30.5 22 30.5H30V21.5Q30 10.5 42 10.5Z" fill="#fff"/><rect x="30" y="28.8" width="20" height="2.4" fill="#6A9DCF"/><circle cx="39" cy="19.5" r="3.4" fill="#6A9DCF"/></g></svg>
<div class="t" style="left:248.8px;top:1346.98px;font-size:24px;color:#3E3446;font-weight:400;font-family:'Liberation Sans', sans-serif;"><b>cache.get</b><span class="dash"></span><span class="d">modelcache:Subscription:12e231d1b74b3e</span></div>
</div>
<div style="position:absolute;left:848px;top:384px;width:2px;height:958px;background:#E0DCE5"></div>
<div style="position:absolute;left:847px;top:569px;width:1px;height:44px;background:#9DB0EA"></div>
<div style="position:absolute;left:1083px;top:384px;width:2px;height:958px;background:#E0DCE5"></div>
<div style="position:absolute;left:40px;top:1342px;width:1955px;height:2px;background:#E0DCE5"></div>
<svg style="position:absolute;left:1000px;top:1354px;" width="36" height="24" viewBox="0 0 36 24"><g fill="#2B2233"><circle cx="5.4" cy="6.3" r="2.4"/><circle cx="5.4" cy="17.7" r="2.4"/><circle cx="17" cy="6.3" r="2.4"/><circle cx="17" cy="17.7" r="2.4"/><circle cx="28.7" cy="6.3" r="2.4"/><circle cx="28.7" cy="17.7" r="2.4"/></g></svg>
<svg style="position:absolute;left:1107px;top:412px;" width="20" height="20" viewBox="0 0 20 20"><path d="M2 2L18 18M18 2L2 18" stroke="#71637E" stroke-width="2" fill="none"/></svg>
<div class="t" style="left:1139.7px;top:409.68px;font-size:24px;color:#71637E;font-weight:400;font-family:'Liberation Sans', sans-serif;letter-spacing:-0.4px;">Close</div>
<div style="position:absolute;left:1214px;top:406px;width:2px;height:32px;background:#E0DCE5"></div>
<div class="t" style="left:1233px;top:409.68px;font-size:24px;color:#3E3446;font-weight:400;font-family:'Liberation Sans', sans-serif;letter-spacing:0.1px;">Profiles</div>
<div style="position:absolute;left:1331px;top:406px;width:2px;height:32px;background:#E0DCE5"></div>
<div style="position:absolute;left:1357px;top:413px;width:20px;height:20px;background:#8C5A8E;border-radius:50%"></div>
<div class="t" style="left:1387px;top:409.68px;font-size:24px;color:#3E3446;font-weight:400;font-family:'Liberation Sans', sans-serif;letter-spacing:0.3px;">base.dispatch.setup - GroupDetails&hellip;</div>
<svg style="position:absolute;left:1805px;top:400px;" width="50" height="50" viewBox="0 0 50 50"><g fill="none" stroke="#2B2233" stroke-width="2.2" stroke-linejoin="round" stroke-linecap="round"><path d="M27.4 12.1L34.9 19.6L28.5 23.9V29.2L26.2 31.3L15.3 20.7L17.1 18.7H22.8L24.9 15.8Z"/><path d="M20.7 26L13 34"/></g></svg>
<div style="position:absolute;left:1351px;top:456px;width:502px;height:4px;background:#3A5FD6"></div>
<div class="t" style="left:1133.8px;top:501.83px;font-size:36px;color:#2B2233;font-weight:700;font-family:'Liberation Sans', sans-serif;letter-spacing:-0.6px;">Span</div>
<div class="t" style="left:1134.5px;top:550.30px;font-size:28px;color:#71637E;font-weight:400;font-family:'Liberation Sans', sans-serif;letter-spacing:0.4px;">ID: a50d33a597ca8198</div>
<svg style="position:absolute;left:1438px;top:550px;" width="24" height="24" viewBox="0 0 24 24"><g fill="none" stroke="#71637E" stroke-width="2" stroke-linejoin="round"><path d="M8 6.5V2.5Q8 1 9.5 1H21.5Q23 1 23 2.5V14.5Q23 16 21.5 16H17"/><rect x="1" y="7.5" width="15" height="15" rx="1.5"/></g></svg>
<svg style="position:absolute;left:1802px;top:502px;" width="32" height="32" viewBox="0 0 32 32"><g fill="none" stroke="#574C62" stroke-width="2.4"><circle cx="16" cy="16" r="12.6"/><circle cx="16" cy="16" r="6.3"/></g></svg>
<svg style="position:absolute;left:1854px;top:502px;" width="32" height="32" viewBox="0 0 32 32"><g fill="none" stroke="#574C62" stroke-width="2.3" stroke-linejoin="round"><rect x="3.2" y="3.4" width="25.3" height="9.2" rx="0.6"/><path d="M7.4 12.6V21H25.9V12.6"/><path d="M11.5 21V28.6H22V21"/></g></svg>
<svg style="position:absolute;left:1906px;top:502px;" width="32" height="32" viewBox="0 0 32 32"><g fill="none" stroke="#574C62" stroke-width="2.4"><rect x="3.2" y="3.4" width="26.4" height="26.2" rx="4.5"/><path d="M20.6 3.4V29.6"/></g></svg>
<svg style="position:absolute;left:1133px;top:616px;" width="36" height="36" viewBox="0 0 100 100"><rect width="100" height="100" rx="17" fill="#6A9DCF"/><path d="M42 10.5H58Q69 10.5 69 21.5V43Q69 49.5 62 49.5H38.5Q28.5 49.5 28.5 59V70H22Q10 70 10 57V43.5Q10 30.5 22 30.5H30V21.5Q30 10.5 42 10.5Z" fill="#fff"/><rect x="30" y="28.8" width="20" height="2.4" fill="#6A9DCF"/><circle cx="39" cy="19.5" r="3.4" fill="#6A9DCF"/><g transform="rotate(180 50 50.5)"><path d="M42 10.5H58Q69 10.5 69 21.5V43Q69 49.5 62 49.5H38.5Q28.5 49.5 28.5 59V70H22Q10 70 10 57V43.5Q10 30.5 22 30.5H30V21.5Q30 10.5 42 10.5Z" fill="#fff"/><rect x="30" y="28.8" width="20" height="2.4" fill="#6A9DCF"/><circle cx="39" cy="19.5" r="3.4" fill="#6A9DCF"/></g></svg>
<div class="t" style="left:1186.4px;top:617.90px;font-size:28px;color:#2B2233;font-weight:700;font-family:'Liberation Sans', sans-serif;letter-spacing:0.1px;">base.dispatch.setup</div>
<div class="t" style="left:1187px;top:657.25px;font-size:44px;color:#3E3446;font-weight:400;font-family:'Liberation Sans', sans-serif;letter-spacing:-1.2px;">0.15ms</div>
<div style="position:absolute;left:1150px;top:660px;width:2px;height:211px;background:#E0DCE5"></div>
<div style="position:absolute;left:1185px;top:726px;width:761px;height:145px;box-sizing:border-box;border:2px solid #E0DCE5;border-radius:12px;background:#fff;overflow:hidden"></div>
<div style="position:absolute;left:1187px;top:728px;width:757px;height:68px;background:#F6F5F8;border-radius:10px 10px 0 0"></div>
<div style="position:absolute;left:1187px;top:796px;width:757px;height:2px;background:#E0DCE5"></div>
<div class="t" style="left:1203.8px;top:750.60px;font-size:28px;color:#3E3446;font-weight:400;font-family:'Liberation Sans', sans-serif;letter-spacing:0.2px;">GroupDetailsEndpoint</div>
<svg style="position:absolute;left:1898px;top:750px;" width="24" height="24" viewBox="0 0 24 24"><g fill="none" stroke="#71637E" stroke-width="2" stroke-linejoin="round"><path d="M8 6.5V2.5Q8 1 9.5 1H21.5Q23 1 23 2.5V14.5Q23 16 21.5 16H17"/><rect x="1" y="7.5" width="15" height="15" rx="1.5"/></g></svg>
<svg style="position:absolute;left:1202px;top:818px;" width="26" height="26" viewBox="0 0 26 26"><g fill="#2B64D4"><circle cx="2.6" cy="22.7" r="2"/><circle cx="3.8" cy="16.4" r="1.9"/><circle cx="8.4" cy="13.6" r="1.9"/><circle cx="13.3" cy="14" r="1.9"/><circle cx="13.3" cy="19.2" r="1.9"/><circle cx="14.1" cy="6.2" r="1.9"/><circle cx="19.4" cy="9.3" r="1.9"/><circle cx="19.4" cy="14" r="1.9"/><circle cx="19.4" cy="19.2" r="1.9"/><circle cx="23" cy="3" r="2"/></g></svg>
<div class="t" style="left:1236.4px;top:819.30px;font-size:28px;color:#2B64D4;font-weight:400;font-family:'Liberation Sans', sans-serif;letter-spacing:0.3px;">More Samples</div>
<div style="position:absolute;left:1133px;top:903px;width:813px;height:2px;background:#E0DCE5"></div>
<div class="t" style="left:1145.7px;top:939.91px;font-size:32px;color:#2B2233;font-weight:700;font-family:'Liberation Sans', sans-serif;letter-spacing:-0.3px;">General</div>
<svg style="position:absolute;left:1908px;top:945px;" width="28" height="20" viewBox="0 0 28 20"><path d="M3.5 16L14 5.5L24.5 16" fill="none" stroke="#3E3446" stroke-width="2.2"/></svg>
<div style="position:absolute;left:1145px;top:997px;width:789px;height:52px;background:#F6F5F8;border-radius:8px"></div>
<div class="t" style="left:1157.6px;top:1007.30px;font-size:24px;color:#71637E;font-weight:400;font-family:'Liberation Mono', monospace;letter-spacing:-0.1px;">Op</div>
<div class="t" style="left:1498.5px;top:1007.30px;font-size:24px;color:#3E3446;font-weight:400;font-family:'Liberation Mono', monospace;letter-spacing:-0.1px;">base.dispatch.setup</div>
<div class="t" style="left:1157.6px;top:1059.30px;font-size:24px;color:#71637E;font-weight:400;font-family:'Liberation Mono', monospace;letter-spacing:-0.1px;">Description</div>
<div class="t" style="left:1498.5px;top:1059.30px;font-size:24px;color:#3E3446;font-weight:400;font-family:'Liberation Mono', monospace;letter-spacing:-0.1px;">GroupDetailsEndpoint</div>
<div style="position:absolute;left:1145px;top:1101px;width:789px;height:52px;background:#F6F5F8;border-radius:8px"></div>
<div class="t" style="left:1157.6px;top:1111.30px;font-size:24px;color:#71637E;font-weight:400;font-family:'Liberation Mono', monospace;letter-spacing:-0.1px;">Duration</div>
<div class="t" style="left:1498.5px;top:1111.30px;font-size:24px;color:#2B2233;font-weight:700;font-family:'Liberation Mono', monospace;letter-spacing:-0.1px;">0.15ms</div>
<div class="t" style="left:1157.6px;top:1163.30px;font-size:24px;color:#71637E;font-weight:400;font-family:'Liberation Mono', monospace;letter-spacing:-0.1px;">Start Timestamp</div>
<div class="t" style="left:1498.5px;top:1163.30px;font-size:24px;color:#3E3446;font-weight:400;font-family:'Liberation Mono', monospace;letter-spacing:-0.1px;">Apr 2, 9:29 PM</div>
<div class="t" style="left:1498.5px;top:1197.00px;font-size:24px;color:#3E3446;font-weight:400;font-family:'Liberation Mono', monospace;letter-spacing:-0.1px;">(1743629372.837911)</div>
<div style="position:absolute;left:1145px;top:1228px;width:789px;height:76px;background:#F6F5F8;border-radius:8px"></div>
<div class="t" style="left:1157.6px;top:1238.30px;font-size:24px;color:#71637E;font-weight:400;font-family:'Liberation Mono', monospace;letter-spacing:-0.1px;">End Timestamp</div>
<div class="t" style="left:1498.5px;top:1238.30px;font-size:24px;color:#3E3446;font-weight:400;font-family:'Liberation Mono', monospace;letter-spacing:-0.1px;">Apr 2, 9:29 PM</div>
<div class="t" style="left:1498.5px;top:1272.00px;font-size:24px;color:#3E3446;font-weight:400;font-family:'Liberation Mono', monospace;letter-spacing:-0.1px;">(1743629372.838058)</div>
</body></html>
